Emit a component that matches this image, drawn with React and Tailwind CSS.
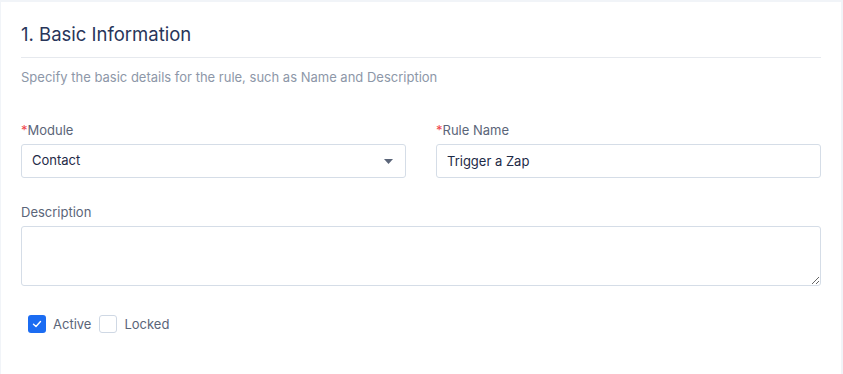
import React, { useState } from 'react';

export default function App() {
  const [active, setActive] = useState(true);
  const [locked, setLocked] = useState(false);
  const [ruleName, setRuleName] = useState('Trigger a Zap');

  return (
    <div
      className="h-[374px] w-full overflow-hidden bg-[#f1f4f8] pt-[2px] pl-[1px] pr-[2px]"
      style={{ fontFamily: 'Inter, "Noto Sans", sans-serif' }}
    >
      <div className="h-full bg-white px-5 pt-5">

        {/* Section header */}
        <h2 className="border-b border-[#e6e9ee] pb-[11px] text-[18.5px] leading-6 font-normal text-[#28355a]">
          1. Basic Information
        </h2>
        <p className="mt-[9px] text-[13px] leading-5 text-[#8d97a8]">
          Specify the basic details for the rule, such as Name and Description
        </p>

        {/* Module + Rule Name */}
        <div className="mt-[33px] grid grid-cols-2 gap-[30px]">
          <div>
            <label className="block text-[13px] leading-5 text-[#5b6579]">
              <span className="text-[#f0454c]">*</span>Module
            </label>
            <div className="mt-1 flex h-[34px] items-center justify-between rounded-[3px] border border-[#d5dde7] bg-white pl-[10px] pr-[11px]">
              <span className="text-[13px] text-[#1e2a47]">Contact</span>
              <svg width="9" height="5" viewBox="0 0 9 5" className="mr-[1px]">
                <path d="M0 0 L9 0 L4.5 5 Z" fill="#5b6579" />
              </svg>
            </div>
          </div>

          <div>
            <label className="block text-[13px] leading-5 text-[#5b6579]">
              <span className="text-[#f0454c]">*</span>Rule Name
            </label>
            <input
              type="text"
              value={ruleName}
              onChange={(e) => setRuleName(e.target.value)}
              className="mt-1 block h-[34px] w-full rounded-[3px] border border-[#d5dde7] bg-white px-[10px] text-[13px] text-[#1e2a47] outline-none"
            />
          </div>
        </div>

        {/* Description */}
        <div className="mt-6">
          <label className="block text-[13px] leading-5 text-[#5b6579]">
            Description
          </label>
          <textarea className="mt-1 block h-[60px] w-full resize-y rounded-[3px] border border-[#d5dde7] bg-white px-[10px] py-2 text-[13px] text-[#1e2a47] outline-none" />
        </div>

        {/* Flags */}
        <div className="mt-[28px] ml-[7px] flex items-center text-[13px] leading-5 text-[#5b6579]">
          <button
            onClick={() => setActive(!active)}
            className={
              active
                ? 'flex h-[18px] w-[18px] items-center justify-center rounded-[3px] bg-[#1b6cf2]'
                : 'flex h-[18px] w-[18px] items-center justify-center rounded-[3px] border border-[#cfd8e4] bg-white'
            }
          >
            {active && (
              <svg width="10" height="8" viewBox="0 0 10 8">
                <path d="M1.5 4.2 L4 6.5 L8.5 1.5" fill="none" stroke="white" strokeWidth="1.4" strokeLinecap="round" strokeLinejoin="round" />
              </svg>
            )}
          </button>
          <span className="ml-[7px]">Active</span>

          <button
            onClick={() => setLocked(!locked)}
            className={
              locked
                ? 'ml-[8px] flex h-[18px] w-[18px] items-center justify-center rounded-[3px] bg-[#1b6cf2]'
                : 'ml-[8px] flex h-[18px] w-[18px] items-center justify-center rounded-[3px] border border-[#cfd8e4] bg-white'
            }
          >
            {locked && (
              <svg width="10" height="8" viewBox="0 0 10 8">
                <path d="M1.5 4.2 L4 6.5 L8.5 1.5" fill="none" stroke="white" strokeWidth="1.4" strokeLinecap="round" strokeLinejoin="round" />
              </svg>
            )}
          </button>
          <span className="ml-[7px]">Locked</span>
        </div>

      </div>
    </div>
  );
}
